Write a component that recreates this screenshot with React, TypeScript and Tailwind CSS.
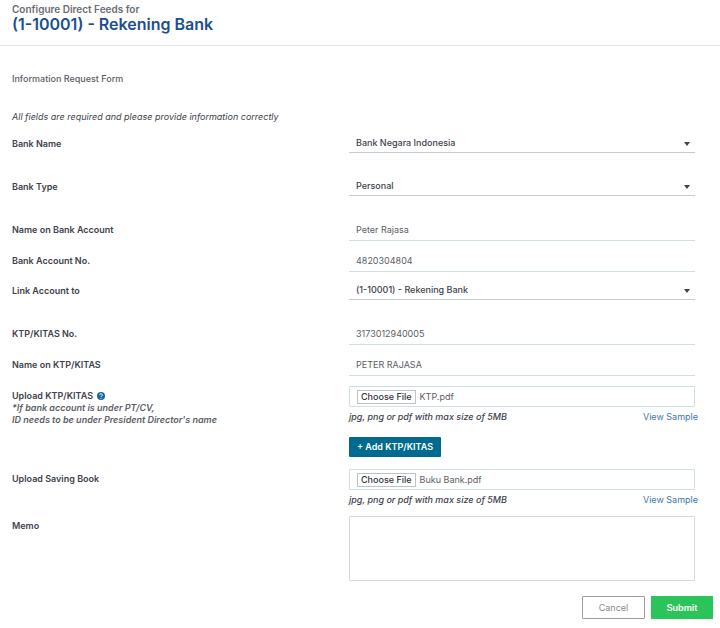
import React, { useState } from 'react';
import clsx from 'clsx';

interface RowProps {
  label: React.ReactNode;
  htmlFor: string;
  note?: React.ReactNode;
  className?: string;
  children: React.ReactNode;
}

const FormRow: React.FC<RowProps> = ({ label, htmlFor, note, className, children }) => (
  <div className={clsx('grid grid-cols-[337fr_346fr]', className)}>
    <div className="pt-1 leading-3">
      <label htmlFor={htmlFor} className="flex items-center gap-1 font-semibold text-[#40424d]">
        {label}
      </label>
      {note}
    </div>
    <div className="min-w-0">{children}</div>
  </div>
);

const SelectField: React.FC<{ id: string; options: string[] }> = ({ id, options }) => (
  <div className="relative">
    <select
      id={id}
      className="block h-[19px] w-full appearance-none border-b border-[#c3cdd0] bg-transparent px-[7px] font-medium text-[#40424d] outline-none"
    >
      {options.map((option) => (
        <option key={option}>{option}</option>
      ))}
    </select>
    <svg viewBox="0 0 6 4" className="pointer-events-none absolute top-2 right-[5px] h-1 w-1.5 fill-[#40424d]">
      <path d="M0 0h6L3 4z" />
    </svg>
  </div>
);

const TextField: React.FC<{ id: string; value: string }> = ({ id, value }) => (
  <input
    id={id}
    type="text"
    defaultValue={value}
    className="block h-[21px] w-full border-b border-[#cfdfe3] px-[7px] pb-0.5 text-[#5c5e66] outline-none"
  />
);

const FileField: React.FC<{ id: string; initialName: string }> = ({ id, initialName }) => {
  const [fileName, setFileName] = useState(initialName);

  return (
    <>
      <label
        htmlFor={id}
        className="relative flex h-[21px] items-center gap-1 rounded-[1px] border border-[#cfdfe3] px-[7px] focus-within:border-[#006b8f]"
      >
        <input
          id={id}
          type="file"
          accept=".jpg,.png,.pdf"
          className="sr-only"
          onChange={(e) => setFileName(e.target.files?.[0]?.name ?? initialName)}
        />
        <span className="border border-[#bfc3c7] px-[3px] leading-3 font-medium text-[#33343c]">Choose File</span>
        <span className="text-[#5c5e66]">{fileName}</span>
      </label>
      <div className="-mr-[3px] mt-1 flex justify-between leading-3">
        <em className="font-medium text-[#40424d]">jpg, png or pdf with max size of 5MB</em>
        <a href="#sample" className="text-[#3f76a8]">View Sample</a>
      </div>
    </>
  );
};

const HelpIcon = () => (
  <svg viewBox="0 0 16 16" className="h-2 w-2" aria-hidden="true">
    <circle cx="8" cy="8" r="8" fill="#1766a6" />
    <path d="M5.3 6.1a2.7 2.5 0 1 1 4.3 2C8.5 8.8 8 9 8 10" fill="none" stroke="#fff" strokeWidth="2" />
    <circle cx="8" cy="12.500" r="1.200" fill="#fff" />
  </svg>
);

export default function App() {
  return (
    <div className="min-h-screen bg-white font-['Inter','Liberation_Sans',sans-serif] text-[9px] text-[#5c5e66]">
      <header className="border-b border-[#e3e9eb] px-3 pt-[3px] pb-3">
        <p className="text-[10px] leading-3 font-semibold text-[#6b6d75]">Configure Direct Feeds for</p>
        <h1 className="text-base leading-[18px] font-semibold text-[#1c4f8f]">(1-10001) - Rekening Bank</h1>
      </header>

      <form onSubmit={(e) => e.preventDefault()}>
        <div className="pt-[27px] pr-[25px] pl-3">
          <h2 className="leading-3 font-medium">Information Request Form</h2>
          <p className="mt-[26px] leading-3 text-[#40424d] italic">
            All fields are required and please provide information correctly
          </p>

          <FormRow label="Bank Name" htmlFor="bank-name" className="mt-[11px]">
            <SelectField id="bank-name" options={['Bank Negara Indonesia', 'Bank Mandiri']} />
          </FormRow>
          <FormRow label="Bank Type" htmlFor="bank-type" className="mt-6">
            <SelectField id="bank-type" options={['Personal', 'Corporate']} />
          </FormRow>
          <FormRow label="Name on Bank Account" htmlFor="account-name" className="mt-6">
            <TextField id="account-name" value="Peter Rajasa" />
          </FormRow>
          <FormRow label="Bank Account No." htmlFor="account-no" className="mt-[10px]">
            <TextField id="account-no" value="4820304804" />
          </FormRow>
          <FormRow label="Link Account to" htmlFor="link-account" className="mt-[9px]">
            <SelectField id="link-account" options={['(1-10001) - Rekening Bank']} />
          </FormRow>
          <FormRow label="KTP/KITAS No." htmlFor="ktp-no" className="mt-6">
            <TextField id="ktp-no" value="3173012940005" />
          </FormRow>
          <FormRow label="Name on KTP/KITAS" htmlFor="ktp-name" className="mt-[10px]">
            <TextField id="ktp-name" value="PETER RAJASA" />
          </FormRow>

          <FormRow
            label={<>Upload KTP/KITAS <HelpIcon /></>}
            htmlFor="ktp-file"
            className="mt-[10px]"
            note={
              <p className="font-semibold italic">
                *If bank account is under PT/CV,
                <br />
                ID needs to be under President Director's name
              </p>
            }
          >
            <FileField id="ktp-file" initialName="KTP.pdf" />
            <button type="button" className="mt-[14px] block h-5 rounded-[1px] bg-[#006b8f] px-2 font-semibold text-white">
              + Add KTP/KITAS
            </button>
          </FormRow>
          <FormRow label="Upload Saving Book" htmlFor="book-file" className="mt-3">
            <FileField id="book-file" initialName="Buku Bank.pdf" />
          </FormRow>
          <FormRow label="Memo" htmlFor="memo" className="mt-[10px]">
            <textarea id="memo" className="block h-[65px] w-full resize-none rounded-[1px] border border-[#cfdbde] px-[7px] py-1 outline-none" />
          </FormRow>
        </div>

        <div className="mt-[15px] flex justify-end gap-1.5 pr-[7px]">
          <button type="button" className="h-[23px] w-[63px] rounded-[1px] border border-[#a39a9c] text-[#85878e]">
            Cancel
          </button>
          <button type="submit" className="h-[23px] w-[62px] bg-[#2bc45a] font-semibold text-white">
            Submit
          </button>
        </div>
      </form>
    </div>
  );
}
